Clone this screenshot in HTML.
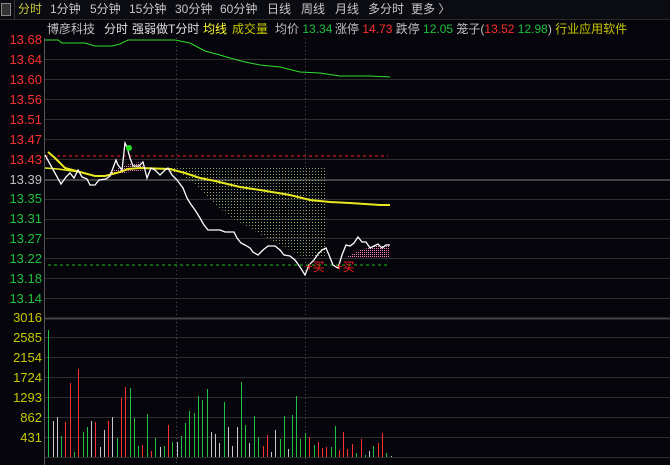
<!DOCTYPE html><html><head><meta charset="utf-8"><style>
body{margin:0;width:670px;height:465px;background:#05050b;overflow:hidden;font-family:"Liberation Sans","Noto Sans CJK SC",sans-serif;position:relative}
.t{position:absolute;font-size:12px;white-space:nowrap;line-height:15px}
.l{position:absolute;right:628px;font-size:13px;line-height:14px;text-align:right}
</style></head><body>
<div style="position:absolute;left:0;top:0;width:670px;height:19px;background:#0b0b12;border-bottom:1px solid #2a2a2a"></div>
<div style="position:absolute;left:1px;top:3px;width:8px;height:11px;border:1px solid #888;background:#333"></div>
<div style="position:absolute;left:14px;top:0;width:1px;height:19px;background:#333"></div>
<div class="t" style="left:18px;top:2px;color:#c8c83c">分时</div>
<div class="t" style="left:50px;top:2px;color:#c8c8c8">1分钟</div>
<div class="t" style="left:90px;top:2px;color:#c8c8c8">5分钟</div>
<div class="t" style="left:129px;top:2px;color:#c8c8c8">15分钟</div>
<div class="t" style="left:175px;top:2px;color:#c8c8c8">30分钟</div>
<div class="t" style="left:220px;top:2px;color:#c8c8c8">60分钟</div>
<div class="t" style="left:267px;top:2px;color:#c8c8c8">日线</div>
<div class="t" style="left:301px;top:2px;color:#c8c8c8">周线</div>
<div class="t" style="left:335px;top:2px;color:#c8c8c8">月线</div>
<div class="t" style="left:368px;top:2px;color:#c8c8c8">多分时</div>
<div class="t" style="left:411px;top:2px;color:#c8c8c8">更多 〉</div>
<div class="t" style="left:47px;top:22px;color:#c0c0c0">博彦科技</div>
<div class="t" style="left:104px;top:22px;color:#e0e0e0">分时</div>
<div class="t" style="left:132px;top:22px;color:#e0e0e0">强弱做T分时</div>
<div class="t" style="left:203px;top:22px;color:#ffff30">均线</div>
<div class="t" style="left:232px;top:22px;color:#c8c800">成交量</div>
<div class="t" style="left:275px;top:22px;color:#c0c0c0">均价 <span style="color:#20c040">13.34</span></div>
<div class="t" style="left:335px;top:22px;color:#c0c0c0">涨停 <span style="color:#ff3030">14.73</span> 跌停 <span style="color:#20c040">12.05</span> 笼子(<span style="color:#ff3030">13.52</span> <span style="color:#20c040">12.98</span>) <span style="color:#c8c800">行业应用软件</span></div>
<svg width="670" height="465" style="position:absolute;left:0;top:0">
<defs><pattern id="d" width="3" height="3" patternUnits="userSpaceOnUse"><rect width="1" height="1" fill="#8aa860"/></pattern>
<pattern id="p" width="2" height="2" patternUnits="userSpaceOnUse"><rect width="1" height="1" fill="#ff80c0"/></pattern></defs>
<g stroke="#2e2e2e" stroke-width="1">
<line x1="45" y1="59.5" x2="670" y2="59.5"/><line x1="45" y1="79.5" x2="670" y2="79.5"/><line x1="45" y1="99.5" x2="670" y2="99.5"/><line x1="45" y1="119.5" x2="670" y2="119.5"/><line x1="45" y1="139.5" x2="670" y2="139.5"/><line x1="45" y1="159.5" x2="670" y2="159.5"/><line x1="45" y1="199.5" x2="670" y2="199.5"/><line x1="45" y1="219.5" x2="670" y2="219.5"/><line x1="45" y1="238.5" x2="670" y2="238.5"/><line x1="45" y1="258.5" x2="670" y2="258.5"/><line x1="45" y1="278.5" x2="670" y2="278.5"/><line x1="45" y1="298.5" x2="670" y2="298.5"/>
<line x1="45" y1="337.5" x2="670" y2="337.5"/><line x1="45" y1="357.5" x2="670" y2="357.5"/><line x1="45" y1="377.5" x2="670" y2="377.5"/><line x1="45" y1="397.5" x2="670" y2="397.5"/><line x1="45" y1="417.5" x2="670" y2="417.5"/><line x1="45" y1="437.5" x2="670" y2="437.5"/><line x1="45" y1="457.5" x2="670" y2="457.5"/>
</g>
<line x1="45" y1="180" x2="670" y2="180" stroke="#444" stroke-width="2"/>
<line x1="45" y1="318.5" x2="670" y2="318.5" stroke="#444" stroke-width="2"/>
<line x1="44.5" y1="38" x2="44.5" y2="465" stroke="#555"/>
<g stroke="#555" stroke-dasharray="1,3"><line x1="176.5" y1="38" x2="176.5" y2="465"/><line x1="305.5" y1="38" x2="305.5" y2="465"/></g>
<line x1="45" y1="156" x2="388" y2="156" stroke="#ff2020" stroke-dasharray="3,3"/>
<line x1="48" y1="265" x2="388" y2="265" stroke="#20c020" stroke-dasharray="3,3"/>
<polygon points="145,167 325,167 325,258 305,258 290,250 270,240 250,228 230,217 210,200 195,185 180,173 160,170" fill="url(#d)"/>
<polygon points="110,172 125,165 140,162 145,170 110,175" fill="url(#p)"/>
<polygon points="345,258 360,250 375,246 390,244 390,258" fill="url(#p)"/>
<polyline fill="none" stroke="#30e030" stroke-width="1" points="45,40 58,40 62,43 85,43 95,46 112,46 120,44 128,40 175,40 190,43 205,51 220,55 230,58 245,62 260,65 280,67 300,72 320,73 340,76 370,76 390,77"/>
<polyline fill="none" stroke="#e8e820" stroke-width="2" points="48,152 55,158 65,168 80,172 95,176 105,176 120,172 128,169 140,168 170,169 185,173 200,178 215,181 240,187 260,190 290,195 310,200 330,202 350,203 380,205 390,205"/>
<polyline fill="none" stroke="#e8e820" stroke-width="1.5" points="45,168 58,169 80,172"/>
<polyline fill="none" stroke="#fff" stroke-width="1.3" points="45,155 61,184 66,177 70,173 74,178 78,170 82,177 87,179 90,185 95,185 99,180 106,179 110,176 113,168 116,160 118,165 122,170 125,143 127,147 130,158 133,166 139,166 143,162 147,178 151,168 155,170 160,175 165,170 168,168 172,175 177,180 183,188 187,198 190,203 195,210 200,218 204,225 208,230 215,230 220,230 225,232 234,232 237,238 241,243 245,245 250,248 253,252 258,255 263,250 268,246 275,246 280,250 284,255 290,256 295,260 300,267 305,275 309,265 314,260 318,254 322,250 326,248 329,255 333,265 338,268 342,255 346,245 350,246 354,243 358,237 362,242 366,242 370,248 374,246 378,244 382,248 386,245 390,245"/>
<circle cx="129" cy="148" r="3" fill="#20e020"/>
<text x="306" y="271" fill="#ff2020" font-size="12" font-family="Noto Sans CJK SC,sans-serif">+买</text>
<text x="336" y="271" fill="#ff2020" font-size="12" font-family="Noto Sans CJK SC,sans-serif">+买</text>
</svg>
<div class="l" style="top:33px;color:#ff3030">13.68</div>
<div class="l" style="top:53px;color:#ff3030">13.64</div>
<div class="l" style="top:73px;color:#ff3030">13.60</div>
<div class="l" style="top:93px;color:#ff3030">13.56</div>
<div class="l" style="top:113px;color:#ff3030">13.51</div>
<div class="l" style="top:133px;color:#ff3030">13.47</div>
<div class="l" style="top:153px;color:#ff3030">13.43</div>
<div class="l" style="top:173px;color:#c0c0c0">13.39</div>
<div class="l" style="top:192px;color:#20c040">13.35</div>
<div class="l" style="top:212px;color:#20c040">13.31</div>
<div class="l" style="top:232px;color:#20c040">13.27</div>
<div class="l" style="top:252px;color:#20c040">13.22</div>
<div class="l" style="top:272px;color:#20c040">13.18</div>
<div class="l" style="top:292px;color:#20c040">13.14</div>
<div class="l" style="top:311px;color:#c8c800">3016</div>
<div class="l" style="top:331px;color:#c8c800">2585</div>
<div class="l" style="top:351px;color:#c8c800">2154</div>
<div class="l" style="top:371px;color:#c8c800">1724</div>
<div class="l" style="top:391px;color:#c8c800">1293</div>
<div class="l" style="top:411px;color:#c8c800">862</div>
<div class="l" style="top:431px;color:#c8c800">431</div>
<svg width="670" height="465" style="position:absolute;left:0;top:0" stroke-width="1">
<g stroke="#20c040"><path d="M48.5 330V457M61.5 436V457M74.5 452V457M83.5 432V457M87.5 427V457M117.5 438V457M130.5 388V457M134.5 418V457M138.5 446V457M147.5 414V457M155.5 438V457M164.5 446V457M172.5 442V457M181.5 436V457M185.5 423V457M189.5 411V457M194.5 413V457M198.5 396V457M202.5 400V457M207.5 389V457M224.5 402V457M241.5 382V457M245.5 425V457M254.5 416V457M258.5 437V457M280.5 439V457M284.5 416V457M292.5 415V457M296.5 396V457M300.5 439V457M305.5 433V457M314.5 445V457M331.5 447V457M335.5 426V457M356.5 453V457M365.5 455V457M373.5 446V457M386.5 453V457"/></g>
<g stroke="#ff3030"><path d="M65.5 422V457M70.5 383V457M78.5 369V457M95.5 422V457M108.5 421V457M121.5 398V457M125.5 387V457M142.5 445V457M151.5 451V457M168.5 425V457M263.5 446V457M267.5 435V457M309.5 437V457M318.5 442V457M322.5 448V457M326.5 447V457M339.5 450V457M343.5 432V457M347.5 449V457M352.5 444V457M361.5 439V457M378.5 443V457M382.5 433V457"/></g>
<g stroke="#c8c8c8"><path d="M53.5 421V457M57.5 417V457M91.5 421V457M100.5 447V457M104.5 430V457M112.5 417V457M160.5 447V457M177.5 442V457M211.5 432V457M215.5 434V457M219.5 443V457M228.5 427V457M232.5 446V457M237.5 427V457M249.5 443V457M271.5 452V457M275.5 430V457M288.5 449V457M369.5 451V457M391.5 456V457"/></g>
</svg>
</body></html>
